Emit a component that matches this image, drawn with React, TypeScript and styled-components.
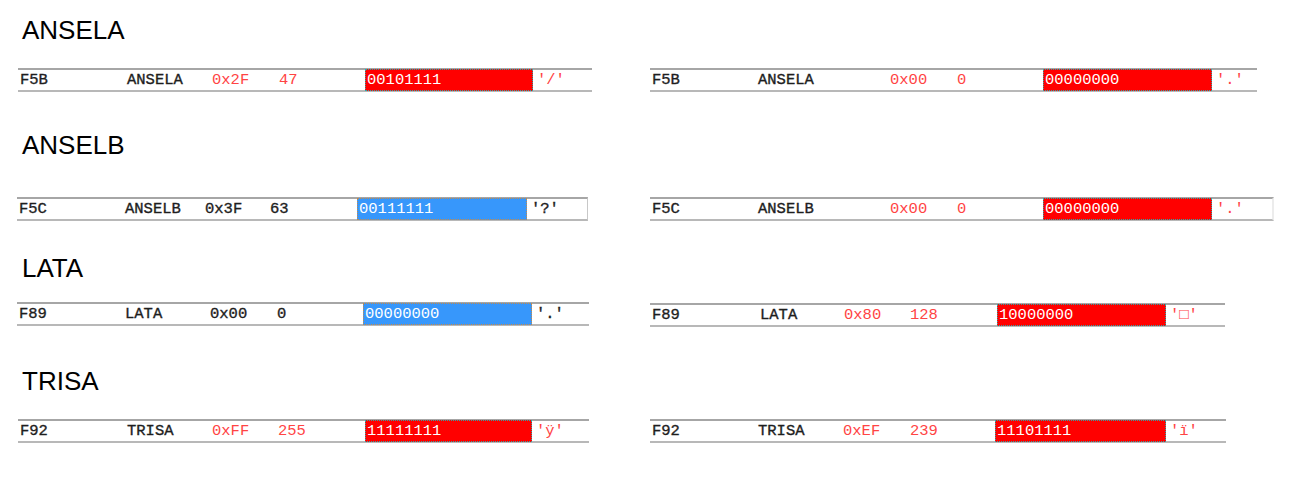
import React from "react";
import styled, { createGlobalStyle } from "styled-components";

const Global = createGlobalStyle`
  html, body { margin: 0; padding: 0; background: #ffffff; }
  body { width: 1295px; height: 481px; overflow: hidden; }
`;

type Tone = "plain" | "changed";
type Sel = "red" | "blue";

interface RowData {
  addr: string;
  name: string;
  hex: string;
  dec: string;
  bin: string;
  chr: string;
  tone: Tone;
  sel: Sel;
  pad: number;
  cols: [number, number, number, number, number];
  width: number;
  indent?: number;
  offsetTop?: number;
  edge?: "none" | "grey" | "faint";
}

interface SectionData {
  title: string;
  top: number;
  gap: number;
  left: RowData;
  right: RowData;
}

const Page = styled.main`
  display: flex;
  flex-direction: column;
  padding: 0 0 0 17px;
  font-family: "Liberation Sans", Arial, sans-serif;
`;

const Section = styled.section<{ $top: number }>`
  display: flex;
  flex-direction: column;
  margin-top: ${(p) => p.$top}px;
`;

const Title = styled.h2<{ $gap: number }>`
  margin: 0 0 ${(p) => p.$gap}px 5px;
  font-family: "Liberation Sans", Arial, sans-serif;
  font-weight: 400;
  font-size: 26px;
  line-height: 30px;
  color: #000;
`;

const Pair = styled.div`
  display: grid;
  grid-template-columns: 633px 1fr;
  align-items: start;
`;

const Row = styled.div<{
  $cols: number[];
  $pad: number;
  $width: number;
  $indent: number;
  $offset: number;
  $edge: string;
}>`
  box-sizing: border-box;
  width: ${(p) => p.$width}px;
  height: 24px;
  margin-top: ${(p) => p.$offset}px;
  margin-left: ${(p) => p.$indent}px;
  display: grid;
  grid-template-columns: ${(p) => p.$cols.map((c) => `${c}px`).join(" ")} 1fr;
  align-items: stretch;
  padding-left: ${(p) => p.$pad}px;
  border-top: 2px solid #a6a6a6;
  border-bottom: 2px solid #b8b8b8;
  border-right: ${(p) =>
    p.$edge === "grey" ? "1px solid #c8c8c8" : p.$edge === "faint" ? "2px solid #ececec" : "none"};
  background: #fff;
  font-family: "Liberation Mono", "Courier New", monospace;
  font-size: 15.5px;
  line-height: 20px;
`;

const Cell = styled.span<{ $tone: Tone }>`
  display: flex;
  align-items: center;
  white-space: pre;
  color: ${(p) => (p.$tone === "changed" ? "#ff4444" : "#1e1e1e")};
  -webkit-text-stroke: ${(p) => (p.$tone === "changed" ? "0" : "0.35px #1e1e1e")};
`;

const Bits = styled.span<{ $sel: Sel }>`
  box-sizing: border-box;
  display: flex;
  align-items: center;
  padding-left: 1px;
  margin-top: -1px;
  margin-bottom: -1px;
  background: ${(p) => (p.$sel === "red" ? "#ff0000" : "#3797fb")};
  border: 1px dotted ${(p) => (p.$sel === "red" ? "#2aa8a8" : "#c48a4a")};
  color: #ffffff;
  white-space: pre;
`;

const Char = styled(Cell)`
  padding-left: 4px;
`;

const Section_ = ({ s }: { s: SectionData }) => (
  <Section $top={s.top}>
    <Title $gap={s.gap}>{s.title}</Title>
    <Pair>
      <RegRow r={s.left} />
      <RegRow r={s.right} />
    </Pair>
  </Section>
);

const RegRow = ({ r }: { r: RowData }) => (
  <Row
    $cols={r.cols}
    $pad={r.pad}
    $width={r.width}
    $indent={r.indent ?? 0}
    $offset={r.offsetTop ?? 0}
    $edge={r.edge ?? "none"}
  >
    <Cell $tone="plain">{r.addr}</Cell>
    <Cell $tone="plain">{r.name}</Cell>
    <Cell $tone={r.tone}>{r.hex}</Cell>
    <Cell $tone={r.tone}>{r.dec}</Cell>
    <Bits $sel={r.sel}>{r.bin}</Bits>
    <Char $tone={r.tone}>{r.chr}</Char>
  </Row>
);

const sections: SectionData[] = [
  {
    title: "ANSELA",
    top: 15,
    gap: 23,
    left: {
      addr: "F5B", name: "ANSELA", hex: "0x2F", dec: "47", bin: "00101111", chr: "'/'",
      tone: "changed", sel: "red", pad: 2, cols: [107, 85, 67, 86, 168], width: 574, indent: 1,
    },
    right: {
      addr: "F5B", name: "ANSELA", hex: "0x00", dec: "0", bin: "00000000", chr: "'.'",
      tone: "changed", sel: "red", pad: 2, cols: [106, 132, 67, 86, 169], width: 607,
    },
  },
  {
    title: "ANSELB",
    top: 38,
    gap: 37,
    left: {
      addr: "F5C", name: "ANSELB", hex: "0x3F", dec: "63", bin: "00111111", chr: "'?'",
      tone: "plain", sel: "blue", pad: 2, cols: [106, 80, 65, 87, 170], width: 571,
      edge: "grey",
    },
    right: {
      addr: "F5C", name: "ANSELB", hex: "0x00", dec: "0", bin: "00000000", chr: "'.'",
      tone: "changed", sel: "red", pad: 2, cols: [106, 132, 67, 86, 169], width: 624,
      edge: "faint",
    },
  },
  {
    title: "LATA",
    top: 32,
    gap: 19,
    left: {
      addr: "F89", name: "LATA", hex: "0x00", dec: "0", bin: "00000000", chr: "'.'",
      tone: "plain", sel: "blue", pad: 2, cols: [106, 85, 67, 86, 169], width: 572,
    },
    right: {
      addr: "F89", name: "LATA", hex: "0x80", dec: "128", bin: "10000000", chr: "'\u25A1'",
      tone: "changed", sel: "red", pad: 2, cols: [108, 84, 66, 87, 169], width: 575,
      offsetTop: 1,
    },
  },
  {
    title: "TRISA",
    top: 39,
    gap: 23,
    left: {
      addr: "F92", name: "TRISA", hex: "0xFF", dec: "255", bin: "11111111", chr: "'\u00FF'",
      tone: "changed", sel: "red", pad: 2, cols: [107, 85, 66, 87, 167], width: 571, indent: 1,
    },
    right: {
      addr: "F92", name: "TRISA", hex: "0xEF", dec: "239", bin: "11101111", chr: "'\u00EF'",
      tone: "changed", sel: "red", pad: 2, cols: [106, 85, 67, 85, 171], width: 576,
    },
  },
];

export default function App() {
  return (
    <>
      <Global />
      <Page>
        {sections.map((s) => (
          <Section_ key={s.title} s={s} />
        ))}
      </Page>
    </>
  );
}
